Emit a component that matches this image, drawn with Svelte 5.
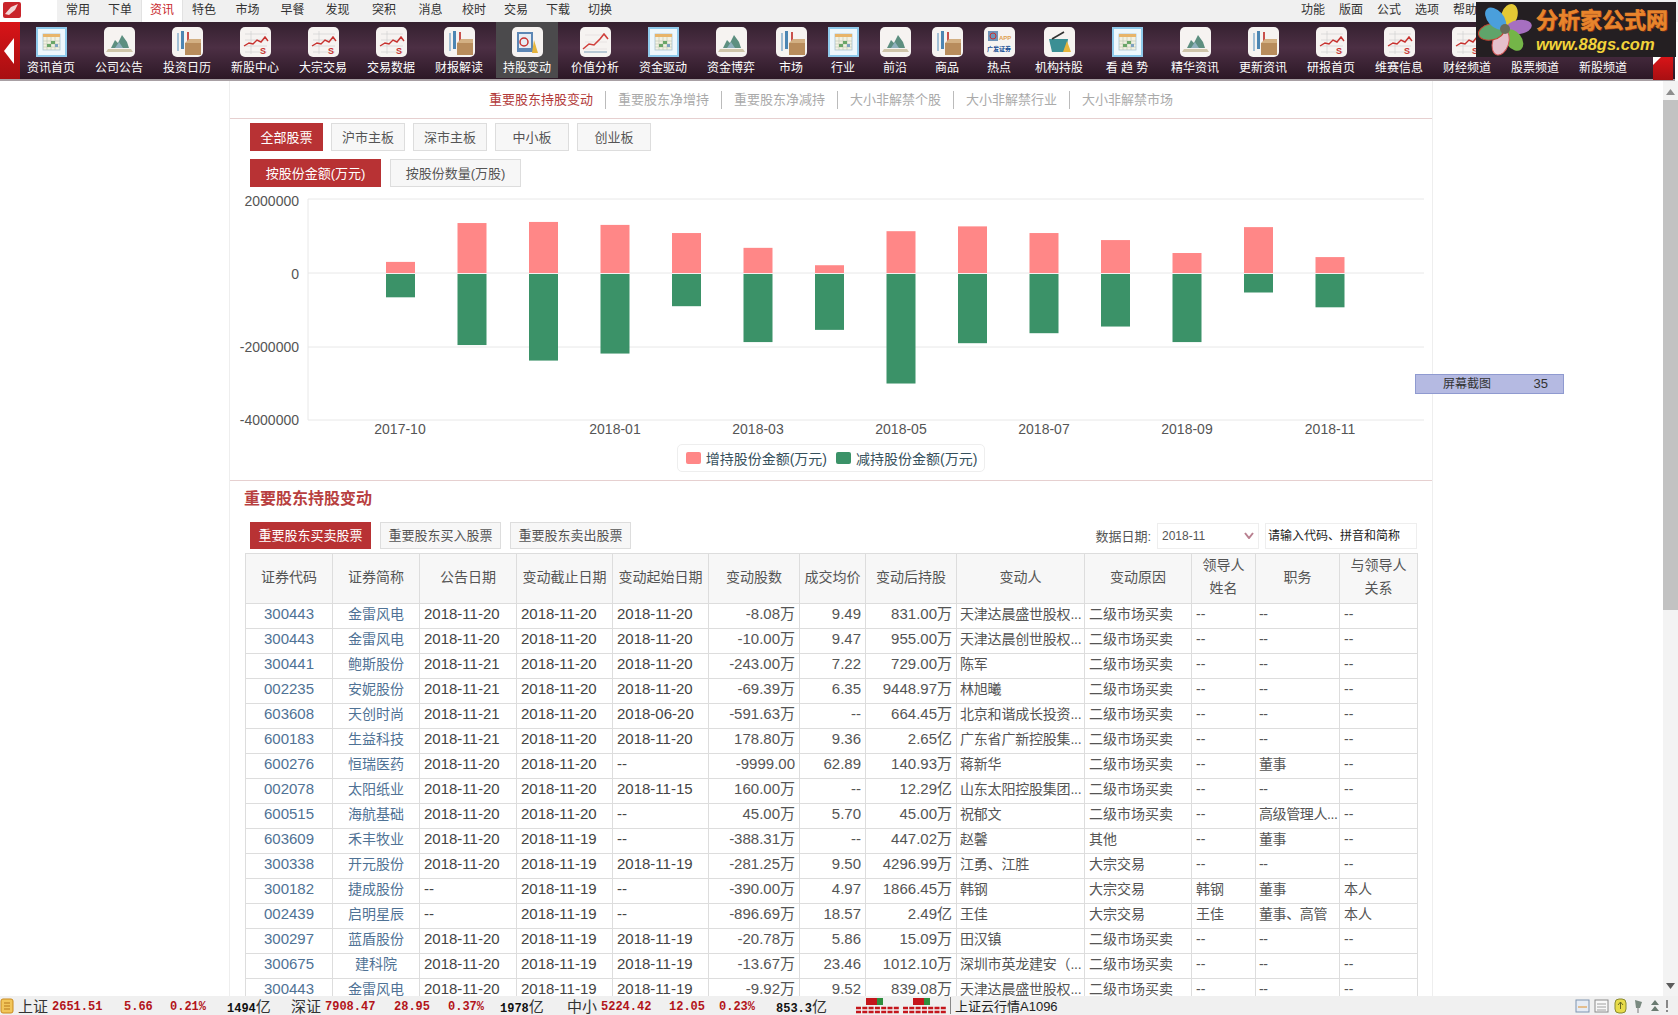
<script>
	const menus = [
		["常用", 42], ["下单", 42], ["资讯", 42, true], ["特色", 42], ["市场", 45], ["早餐", 45], ["发现", 45],
		["突积", 48], ["消息", 45], ["校时", 42], ["交易", 42], ["下载", 42], ["切换", 42],
	];
	const rightMenus = ["功能", "版面", "公式", "选项", "帮助"];

	// icon: which tile to draw, narrow: the short one-word buttons
	const tools = [
		{ label: "资讯首页", icon: "cal" },
		{ label: "公司公告", icon: "area" },
		{ label: "投资日历", icon: "box" },
		{ label: "新股中心", icon: "line" },
		{ label: "大宗交易", icon: "line" },
		{ label: "交易数据", icon: "line" },
		{ label: "财报解读", icon: "box" },
		{ label: "持股变动", icon: "hold", active: true },
		{ label: "价值分析", icon: "value" },
		{ label: "资金驱动", icon: "cal" },
		{ label: "资金博弈", icon: "area" },
		{ label: "市场", icon: "box", narrow: true },
		{ label: "行业", icon: "cal", narrow: true },
		{ label: "前沿", icon: "area", narrow: true },
		{ label: "商品", icon: "box", narrow: true },
		{ label: "热点", icon: "app", narrow: true },
		{ label: "机构持股", icon: "basket" },
		{ label: "看 趋 势", icon: "cal" },
		{ label: "精华资讯", icon: "area" },
		{ label: "更新资讯", icon: "box" },
		{ label: "研报首页", icon: "line" },
		{ label: "维赛信息", icon: "line" },
		{ label: "财经频道", icon: "line" },
		{ label: "股票频道", icon: "blank" },
		{ label: "新股频道", icon: "blank" },
	];

	const tabs = ["重要股东持股变动", "重要股东净增持", "重要股东净减持", "大小非解禁个股", "大小非解禁行业", "大小非解禁市场"];
	const boards = ["全部股票", "沪市主板", "深市主板", "中小板", "创业板"];

	// bar heights in 万元, read off the chart
	const bars = [
		[300000, 630000], [1350000, 1920000], [1380000, 2340000], [1300000, 2150000], [1080000, 870000],
		[680000, 1840000], [210000, 1510000], [1130000, 2960000], [1260000, 1870000], [1080000, 1600000],
		[890000, 1420000], [540000, 1840000], [1240000, 500000], [430000, 900000],
	];
	const zero = 78;
	const unit = 74 / 2000000;
	// label, line y, label baseline
	const ticks = [["2000000", 4, 11], ["0", zero, 84], ["-2000000", 152, 157], ["-4000000", 225, 230]];
	const months = [["2017-10", 170], ["2018-01", 385], ["2018-03", 528], ["2018-05", 671], ["2018-07", 814], ["2018-09", 957], ["2018-11", 1100]];

	const cols = [87, 87, 97, 96, 96, 91, 66, 91, 128, 107, 64, 84, 78];
	const heads = ["证券代码", "证券简称", "公告日期", "变动截止日期", "变动起始日期", "变动股数", "成交均价", "变动后持股", "变动人", "变动原因", ["领导人", "姓名"], "职务", ["与领导人", "关系"]];

	const rows = [
		["300443", "金雷风电", "2018-11-20", "2018-11-20", "2018-11-20", "-8.08万", "9.49", "831.00万", "天津达晨盛世股权...", "二级市场买卖", "--", "--", "--"],
		["300443", "金雷风电", "2018-11-20", "2018-11-20", "2018-11-20", "-10.00万", "9.47", "955.00万", "天津达晨创世股权...", "二级市场买卖", "--", "--", "--"],
		["300441", "鲍斯股份", "2018-11-21", "2018-11-20", "2018-11-20", "-243.00万", "7.22", "729.00万", "陈军", "二级市场买卖", "--", "--", "--"],
		["002235", "安妮股份", "2018-11-21", "2018-11-20", "2018-11-20", "-69.39万", "6.35", "9448.97万", "林旭曦", "二级市场买卖", "--", "--", "--"],
		["603608", "天创时尚", "2018-11-21", "2018-11-20", "2018-06-20", "-591.63万", "--", "664.45万", "北京和谐成长投资...", "二级市场买卖", "--", "--", "--"],
		["600183", "生益科技", "2018-11-21", "2018-11-20", "2018-11-20", "178.80万", "9.36", "2.65亿", "广东省广新控股集...", "二级市场买卖", "--", "--", "--"],
		["600276", "恒瑞医药", "2018-11-20", "2018-11-20", "--", "-9999.00", "62.89", "140.93万", "蒋新华", "二级市场买卖", "--", "董事", "--"],
		["002078", "太阳纸业", "2018-11-20", "2018-11-20", "2018-11-15", "160.00万", "--", "12.29亿", "山东太阳控股集团...", "二级市场买卖", "--", "--", "--"],
		["600515", "海航基础", "2018-11-20", "2018-11-20", "--", "45.00万", "5.70", "45.00万", "祝郁文", "二级市场买卖", "--", "高级管理人...", "--"],
		["603609", "禾丰牧业", "2018-11-20", "2018-11-19", "--", "-388.31万", "--", "447.02万", "赵馨", "其他", "--", "董事", "--"],
		["300338", "开元股份", "2018-11-20", "2018-11-19", "2018-11-19", "-281.25万", "9.50", "4296.99万", "江勇、江胜", "大宗交易", "--", "--", "--"],
		["300182", "捷成股份", "--", "2018-11-19", "--", "-390.00万", "4.97", "1866.45万", "韩钢", "大宗交易", "韩钢", "董事", "本人"],
		["002439", "启明星辰", "--", "2018-11-19", "--", "-896.69万", "18.57", "2.49亿", "王佳", "大宗交易", "王佳", "董事、高管", "本人"],
		["300297", "蓝盾股份", "2018-11-20", "2018-11-19", "2018-11-19", "-20.78万", "5.86", "15.09万", "田汉镇", "二级市场买卖", "--", "--", "--"],
		["300675", "建科院", "2018-11-20", "2018-11-19", "2018-11-19", "-13.67万", "23.46", "1012.10万", "深圳市英龙建安（...", "二级市场买卖", "--", "--", "--"],
		["300443", "金雷风电", "2018-11-20", "2018-11-19", "2018-11-19", "-9.92万", "9.52", "839.08万", "天津达晨盛世股权...", "二级市场买卖", "--", "--", "--"],
	];

	const quotes = [
		["上证", 34, "cn"], ["2651.51", 72, "up"], ["5.66", 46, "up"], ["0.21%", 57, "up"], ["1494", 64, "vol"],
		["深证", 34, "cn"], ["7908.47", 69, "up"], ["28.95", 54, "up"], ["0.37%", 52, "up"], ["1978", 67, "vol"],
		["中小", 34, "cn"], ["5224.42", 68, "up"], ["12.05", 50, "up"], ["0.23%", 57, "up"], ["853.3", 73, "vol"],
	];
</script>

<div class="page">
	<header class="menu">
		<div class="brand">
			<svg width="18" height="16" viewBox="0 0 18 16">
				<rect width="18" height="16" rx="2" fill="#c9252b" />
				<path d="M2 12 L8 5 L15 2 L12 8 L6 13 Z" fill="#f3d6d6" />
			</svg>
		</div>
		{#each menus as [name, width, current]}
			<span class="menu-item" class:current style="width: {width}px">{name}</span>
		{/each}
		<div class="menu-right">
			{#each rightMenus as name}
				<span class="menu-item right">{name}</span>
			{/each}
		</div>
	</header>

	<nav class="toolbar">
		<div class="nav-end">
			<svg width="11" height="26" viewBox="0 0 11 26"><path d="M10 0 V26 L0 13 Z" fill="#fff" /></svg>
		</div>
		<div class="tools">
			{#each tools as tool}
				<div class="tool" class:narrow={tool.narrow}>
					<div class="tool-in" class:active={tool.active}>
						<div class="tile" class:blue={tool.icon === "cal"}>
							<svg width="27" height="26" viewBox="0 0 27 26">
								{#if tool.icon === "cal"}
									<rect x="5" y="5" width="17" height="16" fill="#f3f1e2" stroke="#a9c4d2" stroke-width="0.8" />
									<rect x="5" y="5" width="17" height="3" fill="#e8b56a" />
									<path d="M5 12 H22 M5 15 H22 M5 18 H22 M9 8 V21 M13 8 V21 M17 8 V21" stroke="#bcc6b4" stroke-width="0.6" />
									<rect x="13" y="12" width="4" height="3" fill="#6aa668" />
									<rect x="9" y="15" width="4" height="3" fill="#6aa668" />
									<rect x="17" y="15" width="3" height="3" fill="#7ea2c2" />
								{:else if tool.icon === "area"}
									<path d="M5 19 L9 11 L12 14 L16 6 L21 13 L23 19 Z" fill="#5d8f80" />
									<path d="M9 19 L13 13 L17 19 Z" fill="#8eb0bc" />
									<path d="M2 20 H25 L27 23 H0 Z" fill="#cfc5aa" />
								{:else if tool.icon === "box"}
									<rect x="3" y="4" width="2" height="18" fill="#a3c0d6" />
									<rect x="7" y="2" width="3" height="18" fill="#4d86b3" />
									<rect x="13" y="3" width="2" height="9" fill="#c9504c" />
									<rect x="11" y="14" width="16" height="12" fill="#b88c5c" />
									<path d="M11 14 L15 10 H27 V14 Z" fill="#d3b083" />
								{:else if tool.icon === "line"}
									<path d="M3 5 H25 M3 11 H25 M3 17 H25 M3 23 H25 M9 2 V25" stroke="#cfcfcf" stroke-width="0.6" />
									<path d="M2 17 L7 14 L11 15 L15 11 L19 13 L23 8 L26 12" fill="none" stroke="#c8322f" stroke-width="1.4" />
									<text x="18" y="25" class="tile-s">S</text>
								{:else if tool.icon === "hold"}
									<rect x="3" y="3" width="16" height="20" fill="#5d87b5" />
									<rect x="5" y="5" width="12" height="14" fill="#e7edf4" />
									<circle cx="10" cy="13" r="4" fill="none" stroke="#c8322f" stroke-width="1.5" />
									<path d="M18 24 L20 11 L24 24 Z" fill="#e6b53c" />
								{:else if tool.icon === "value"}
									<path d="M3 6 H25 M3 13 H25 M3 20 H25" stroke="#e2dcdc" stroke-width="0.7" />
									<path d="M1 20 L7 15 L12 16 L18 10 L22 5 L26 10" fill="none" stroke="#d0403c" stroke-width="1.6" />
									<path d="M2 23 H25" stroke="#b8c8d4" stroke-width="2" />
								{:else if tool.icon === "app"}
									<rect x="2" y="2" width="10" height="10" fill="#6f93b8" />
									<circle cx="7" cy="7" r="3" fill="none" stroke="#c8322f" />
									<text x="13" y="11" class="tile-app">APP</text>
									<text x="1" y="22" class="tile-gf">广发证券</text>
								{:else if tool.icon === "basket"}
									<path d="M3 10 H22 L20 23 H6 Z" fill="#3b8f94" />
									<path d="M6 10 L18 3" stroke="#333" stroke-width="1.6" />
									<path d="M17 23 L21 12 L25 23 Z" fill="#e6b53c" />
								{/if}
							</svg>
						</div>
						<span class="tool-label">{tool.label}</span>
					</div>
				</div>
			{/each}
		</div>
		<div class="nav-end right">
			<svg width="8" height="8" viewBox="0 0 8 8"><path d="M0 0 H8 L0 8 Z" fill="#fff" /></svg>
		</div>
	</nav>

	<div class="body">
		<div class="scroller">
			<section class="panel">
				<div class="tabs">
					{#each tabs as tab, i}
						<span class="tab" class:on={i === 0}>{tab}</span>
					{/each}
				</div>

				<div class="filters">
					<div class="btn-row">
						{#each boards as board, i}
							<button class="btn board" class:on={i === 0}>{board}</button>
						{/each}
					</div>
					<div class="btn-row wide-gap">
						<button class="btn on amount">按股份金额(万元)</button>
						<button class="btn amount">按股份数量(万股)</button>
					</div>
				</div>

				<svg class="chart" width="1202" height="249" viewBox="0 0 1202 249">
					{#each ticks as [label, y, base]}
						<line x1="78" x2="1194" y1={y} y2={y} class="grid" />
						<text x="69" y={base} text-anchor="end" class="axis">{label}</text>
					{/each}
					<line x1="78" x2="78" y1="4" y2="225" class="grid" />
					{#each bars as [up, down], i}
						<rect x={156 + i * 71.5} y={zero - up * unit} width="29" height={up * unit} fill="#ff8787" />
						<rect x={156 + i * 71.5} y={zero + 1} width="29" height={down * unit} fill="#3b9268" />
					{/each}
					{#each months as [label, x]}
						<text {x} y="239" text-anchor="middle" class="axis">{label}</text>
					{/each}
				</svg>

				<div class="legend-row">
					<div class="legend">
						<i class="swatch pink"></i><span>增持股份金额(万元)</span>
						<i class="swatch green"></i><span>减持股份金额(万元)</span>
					</div>
				</div>

				<div class="detail">
					<h2>重要股东持股变动</h2>
					<div class="detail-bar">
						<div class="btn-row wide-gap">
							<button class="btn wide on">重要股东买卖股票</button>
							<button class="btn wide">重要股东买入股票</button>
							<button class="btn wide">重要股东卖出股票</button>
						</div>
						<div class="search">
							<span class="date-label">数据日期:</span>
							<div class="select">
								<span>2018-11</span>
								<svg width="10" height="7" viewBox="0 0 10 7"><path d="M1 1 L5 6 L9 1" fill="none" stroke="#b98090" stroke-width="2" /></svg>
							</div>
							<input class="code" placeholder="请输入代码、拼音和简称" />
						</div>
					</div>

					<table>
						<colgroup>
							{#each cols as width}<col style="width: {width}px" />{/each}
						</colgroup>
						<thead>
							<tr>
								{#each heads as head}
									<th>
										{#if Array.isArray(head)}
											{head[0]}<br />{head[1]}
										{:else}
											{head}
										{/if}
									</th>
								{/each}
							</tr>
						</thead>
						<tbody>
							{#each rows as row}
								<tr>
									{#each row as cell, c}
										<td class="c{c}">{cell}</td>
									{/each}
								</tr>
							{/each}
						</tbody>
					</table>
				</div>
			</section>
		</div>
		<div class="scrollbar">
			<svg width="9" height="6" viewBox="0 0 9 6"><path d="M0 6 L4.5 0 L9 6 Z" fill="#8d8d8d" /></svg>
			<div class="thumb"></div>
			<svg width="9" height="6" viewBox="0 0 9 6"><path d="M0 0 L4.5 6 L9 0 Z" fill="#5c5c5c" /></svg>
		</div>
	</div>

	<footer class="status">
		<svg class="coin" width="14" height="16" viewBox="0 0 14 16">
			<rect x="1" y="1" width="12" height="14" rx="2" fill="#f2c65a" stroke="#c98a1e" />
			<path d="M4 5 H10 M4 8 H10 M4 11 H10" stroke="#b5771a" />
		</svg>
		{#each quotes as [text, width, kind]}
			<span class="quote {kind}" style="width: {width}px">{text}{#if kind === "vol"}<small>亿</small>{/if}</span>
		{/each}
		<div class="minis">
			{#each [0, 1] as m}
				<svg width="44" height="17" viewBox="0 0 44 17">
					<rect x="10" y="1" width="11" height="7" fill="#c4161c" />
					<rect x="21" y="1" width="6" height="7" fill="#2f8f3e" />
					<path d="M0 11 H44 M0 15 H44" stroke="#c4161c" stroke-width="2.500" stroke-dasharray="5 1.300" />
				</svg>
			{/each}
		</div>
		<span class="cloud">上证云行情A1096</span>
		<div class="tray">
			<svg width="96" height="17" viewBox="0 0 96 17">
				<rect x="1" y="3" width="13" height="12" fill="#e6ecf5" stroke="#7f94b0" />
				<path d="M3 10 H12" stroke="#e0902a" />
				<rect x="20" y="3" width="13" height="12" fill="#f8f8f8" stroke="#8a8a8a" />
				<path d="M22 7 H31 M22 10 H31 M22 13 H31" stroke="#a0a0a0" />
				<rect x="40" y="2" width="11" height="14" rx="4" fill="#e8dc4a" stroke="#8a8a30" />
				<path d="M45.500 5 V12 M43 8 L45.500 5 L48 8" stroke="#6a6a20" fill="none" />
				<path d="M60 3 L67 5 L65 11 L61 11 Z" fill="#7a8a80" />
				<path d="M63 11 V16" stroke="#777" />
				<path d="M76 8 L80 3 L84 8 Z M76 14 L80 9 L84 14 Z" fill="#6a7a70" />
				<path d="M92 3 V11 M92 13 V15" stroke="#888" stroke-width="2" />
			</svg>
		</div>
	</footer>

	<!-- floating bits over the page -->
	<div class="watermark">
		<svg width="60" height="55" viewBox="0 0 60 55">
			<g transform="translate(29 27)">
				<ellipse cx="0" cy="-14" rx="8" ry="12" fill="#e4c934" transform="rotate(18)" />
				<ellipse cx="0" cy="-14" rx="7" ry="13" fill="#a66fc0" transform="rotate(82)" />
				<ellipse cx="0" cy="-14" rx="8" ry="12" fill="#74b548" transform="rotate(142)" />
				<ellipse cx="0" cy="-14" rx="8" ry="13" fill="#e6c0cc" stroke="#d65a5a" transform="rotate(198)" />
				<ellipse cx="0" cy="-14" rx="8" ry="13" fill="#5fa46a" stroke="#c8402f" transform="rotate(258)" />
				<ellipse cx="0" cy="-14" rx="8" ry="13" fill="#4a9fdc" transform="rotate(318)" />
				<circle r="5" fill="#6a6a5a" />
			</g>
		</svg>
		<div class="wm-text">
			<span class="wm-cn">分析家公式网</span>
			<span class="wm-en">www.88gs.com</span>
		</div>
	</div>
	<div class="shot"><span>屏幕截图</span><span class="shot-n">35</span></div>
</div>

<style>
	:global(body) {
		margin: 0;
		background: #fff;
	}

	.page {
		position: relative;
		display: flex;
		flex-direction: column;
		width: 1678px;
		height: 1015px;
		overflow: hidden;
		font-family: "Liberation Sans", "Noto Sans CJK SC", sans-serif;
		color: #555;
	}

	/* top menu */
	.menu {
		display: flex;
		height: 22px;
		flex: none;
		background: #f0f0f0;
		font-size: 12px;
		color: #333;
	}

	.brand {
		width: 57px;
		padding: 2px 0 0 3px;
		box-sizing: border-box;
		background: #fff;
	}

	.menu-item {
		text-align: center;
		line-height: 21px;
	}

	.menu-item.current {
		background: #fff;
		color: #c8282c;
		border-left: 1px solid #e2e2e2;
		border-right: 1px solid #e2e2e2;
		box-sizing: border-box;
	}

	.menu-right {
		display: flex;
		margin-left: 673px;
	}

	.menu-item.right {
		width: 38px;
	}

	/* icon toolbar */
	.toolbar {
		display: flex;
		flex: none;
		height: 59px;
		box-sizing: border-box;
		width: 1675px;
		background: linear-gradient(#34202f, #4c2f44 45%, #2c1826);
		border-bottom: 2px solid #a8a0a4;
		color: #fff;
	}

	.nav-end {
		display: flex;
		flex: none;
		align-items: center;
		justify-content: flex-start;
		width: 20px;
		padding-left: 4px;
		box-sizing: border-box;
		background: linear-gradient(#d81418, #a80f12);
	}

	.nav-end.right {
		position: absolute;
		left: 1653px;
		top: 57px;
		height: 23px;
		align-items: flex-start;
		padding: 0;
	}

	.tools {
		display: flex;
		margin-left: -3px;
	}

	.tool {
		flex: none;
		width: 68px;
		display: flex;
		justify-content: center;
	}

	.tool.narrow {
		width: 52px;
	}

	.tool-in {
		display: flex;
		flex-direction: column;
		align-items: center;
		width: 62px;
		height: 56px;
		padding-top: 5px;
		box-sizing: border-box;
		white-space: nowrap;
	}

	.tool-in.active {
		background: #4b4a4c;
	}

	.tile {
		display: flex;
		align-items: center;
		justify-content: center;
		width: 31px;
		height: 30px;
		border-radius: 5px;
		background: #f6f3f1;
		overflow: hidden;
	}

	.tile.blue {
		background: #eef7fc;
		border-radius: 1px;
		box-shadow: inset 0 0 0 2px #8fcaec;
	}

	.tile-s {
		font: bold 9px "Liberation Sans", sans-serif;
		fill: #c8322f;
	}

	.tile-app {
		font: bold 6px "Liberation Sans", sans-serif;
		fill: #e0a050;
	}

	.tile-gf {
		font: bold 6px "Noto Sans CJK SC", sans-serif;
		fill: #1a4f96;
	}

	.tool-label {
		margin-top: 2px;
		font-size: 12px;
		line-height: 19px;
		color: #fff;
	}

	/* page body */
	.body {
		display: flex;
		flex: 1;
		min-height: 0;
	}

	.scroller {
		flex: 1;
		padding-left: 229px;
		overflow: hidden;
	}

	.panel {
		width: 1204px;
		box-sizing: border-box;
		border-left: 1px solid #eee;
		border-right: 1px solid #eee;
		min-height: 100%;
	}

	.scrollbar {
		display: flex;
		flex: none;
		flex-direction: column;
		align-items: center;
		justify-content: space-between;
		width: 15px;
		padding: 8px 0 7px;
		box-sizing: border-box;
		background: #f3f3f3;
	}

	.thumb {
		width: 15px;
		height: 510px;
		margin-top: 5px;
		margin-bottom: auto;
		background: #c2c2c2;
	}

	.tabs {
		display: flex;
		justify-content: center;
		align-items: center;
		height: 37px;
		border-bottom: 1px solid #e6d0d0;
		font-size: 13px;
		color: #aaa;
	}

	.tab {
		padding: 0 12px;
		line-height: 18px;
		border-left: 1px solid #bbb;
	}

	.tab:first-child {
		border-left: 0;
	}

	.tab.on {
		color: #b23a3a;
	}

	.filters {
		display: flex;
		flex-direction: column;
		gap: 8px;
		padding: 4px 0 0 20px;
	}

	.btn-row {
		display: flex;
		gap: 8px;
	}

	.btn-row.wide-gap {
		gap: 9px;
	}

	.btn {
		height: 28px;
		padding: 0 0 2px;
		box-sizing: border-box;
		border: 1px solid #ddd;
		background: #f7f7f7;
		color: #555;
		font: 13px "Liberation Sans", "Noto Sans CJK SC", sans-serif;
	}

	.btn.on {
		border-color: #b83234;
		background: #b83234;
		color: #fff;
	}

	.btn.board {
		width: 74px;
	}

	.btn.board:first-child {
		width: 73px;
	}

	.btn.amount {
		width: 131px;
	}

	.chart {
		display: block;
		margin-top: 8px;
	}

	.grid {
		stroke: #e8e8e8;
	}

	.axis {
		font: 14px "Liberation Sans", sans-serif;
		fill: #555;
	}

	.legend-row {
		display: flex;
		justify-content: center;
		padding-bottom: 8px;
		border-bottom: 1px solid #e6d0d0;
	}

	.legend {
		display: flex;
		align-items: center;
		height: 28px;
		padding: 0 7px 0 8px;
		box-sizing: border-box;
		border: 1px solid #eee;
		border-radius: 5px;
		font-size: 14px;
		color: #36505c;
	}

	.swatch {
		width: 15px;
		height: 12px;
		margin-right: 5px;
		border-radius: 2px;
	}

	.swatch.pink {
		background: #ff8787;
	}

	.swatch.green {
		margin-left: 9px;
		background: #3b9268;
	}

	.detail {
		padding: 0 15px;
	}

	h2 {
		margin: 0 0 0 -1px;
		height: 41px;
		font-size: 16px;
		line-height: 36px;
		color: #b84040;
	}

	.detail-bar {
		display: flex;
		justify-content: space-between;
		padding-left: 5px;
		margin-bottom: 4px;
	}

	.btn.wide {
		width: 121px;
		height: 27px;
	}

	.search {
		display: flex;
		align-items: center;
		font-size: 13px;
		color: #555;
		height: 27px;
	}

	.date-label {
		margin-right: 6px;
	}

	.select {
		display: flex;
		align-items: center;
		justify-content: space-between;
		width: 102px;
		height: 26px;
		padding: 0 4px;
		box-sizing: border-box;
		border: 1px solid #eee;
		font-size: 12px;
	}

	.code {
		width: 152px;
		height: 26px;
		margin-left: 6px;
		padding: 0 2px;
		box-sizing: border-box;
		border: 1px solid #eee;
		font: 12px "Liberation Sans", "Noto Sans CJK SC", sans-serif;
	}

	.code::placeholder {
		color: #222;
		opacity: 1;
	}

	table {
		width: 1172px;
		table-layout: fixed;
		border-collapse: collapse;
		font-size: 14px;
	}

	th {
		height: 46px;
		padding: 0 0 3px;
		border: 1px solid #ddd;
		background: #f7f7f7;
		font-weight: 400;
		line-height: 23px;
		color: #555;
	}

	td {
		height: 20px;
		padding: 0 4px 4px;
		border: 1px solid #ddd;
		line-height: 20px;
		white-space: nowrap;
		overflow: hidden;
		color: #555;
	}

	.c0,
	.c1 {
		text-align: center;
		color: #4f7295;
	}

	.c0,
	.c2,
	.c3,
	.c4,
	.c5,
	.c6,
	.c7 {
		font-size: 15px;
	}

	.c5,
	.c6,
	.c7 {
		text-align: right;
	}

	.c2,
	.c3,
	.c4 {
		color: #444;
	}

	.c8 {
		padding-left: 3px;
		padding-right: 0;
		letter-spacing: -0.2px;
	}

	.c11 {
		padding-left: 3px;
		padding-right: 0;
		letter-spacing: -0.4px;
	}

	/* status bar */
	.status {
		position: relative;
		display: flex;
		flex: none;
		align-items: center;
		height: 19px;
		background: #f0f0f0;
		white-space: nowrap;
	}

	.coin {
		flex: none;
		margin: 0 4px 0 0;
	}

	.quote {
		flex: none;
		display: block;
		margin-top: 3px;
		font: bold 12px "Liberation Mono", monospace;
		color: #b3141a;
	}

	.quote.cn {
		margin-top: 0;
		font: 15px "Liberation Sans", "Noto Sans CJK SC", sans-serif;
		color: #333;
	}

	.quote.vol {
		margin-top: 0;
		color: #111;
	}

	.quote small {
		font: 15px "Liberation Sans", "Noto Sans CJK SC", sans-serif;
		color: #333;
	}

	.minis {
		display: flex;
		flex: none;
		gap: 3px;
		margin-left: 7px;
		padding-right: 3px;
		border-right: 1px solid #888;
	}

	.cloud {
		margin-left: 4px;
		font-size: 13px;
		color: #222;
	}

	.tray {
		margin-left: auto;
		padding-right: 7px;
		display: flex;
	}

	.watermark {
		position: absolute;
		left: 1476px;
		top: 2px;
		display: flex;
		width: 200px;
		height: 55px;
		background: #241f22;
	}

	.wm-text {
		display: flex;
		flex-direction: column;
		white-space: nowrap;
		line-height: 1;
	}

	.wm-cn {
		margin-top: 4px;
		font: bold 22px/24px "Noto Sans CJK SC", sans-serif;
		color: #e8842c;
		-webkit-text-stroke: 0.6px #e8842c;
		text-shadow: 1px 1px 0 #7a3010;
	}

	.wm-en {
		margin-top: 5px;
		font: italic bold 16.500px/18px "Liberation Sans", sans-serif;
		color: #f2d33a;
	}

	.shot {
		position: absolute;
		left: 1415px;
		top: 374px;
		display: flex;
		justify-content: space-between;
		width: 149px;
		height: 20px;
		padding: 0 15px 0 27px;
		box-sizing: border-box;
		border: 1px solid #8f9ad0;
		background: #b5bae2;
		font-size: 12px;
		line-height: 18px;
		color: #333;
	}

	.shot-n {
		font-size: 13px;
	}
</style>
